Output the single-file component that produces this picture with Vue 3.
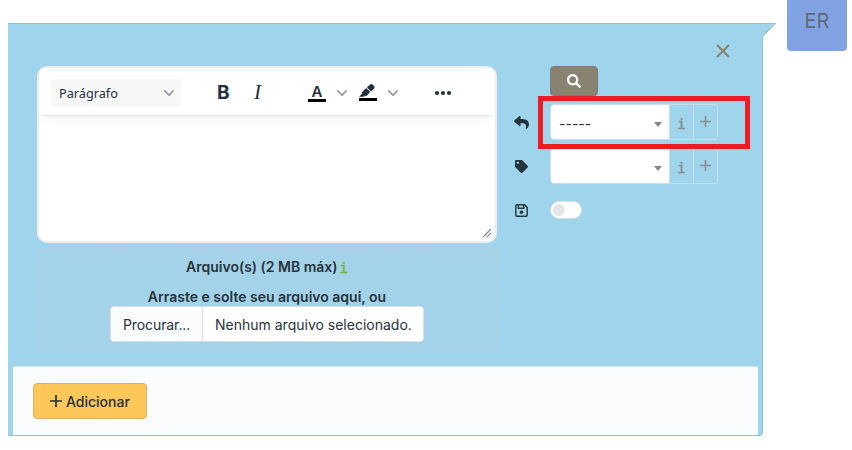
<script setup>
import { ref } from 'vue'

const chevron = 'M8.7 2.2c.3-.3.8-.3 1 0 .4.4.4.9 0 1.2L5.7 7.8c-.3.3-.9.3-1.2 0L.2 3.4a.8.8 0 010-1.2c.3-.3.8-.3 1.1 0L5 6l3.7-3.8z'
const fields = [
  {
    name: 'reply',
    value: '-----',
    icon: 'M8.309 189.836L184.313 37.851C199.719 24.546 224 35.347 224 56.015v80.053c160.629 1.839 288 34.032 288 186.258 0 61.441-39.581 122.309-83.333 154.132-13.653 9.931-33.111-2.533-28.077-18.631 45.344-145.012-21.507-183.51-176.59-185.742V360c0 20.7-24.3 31.453-39.687 18.164l-176.004-152c-11.071-9.562-11.086-26.753 0-36.328z',
    highlighted: true,
  },
  {
    name: 'tag',
    value: '',
    icon: 'M0 252.118V48C0 21.49 21.49 0 48 0h204.118a48 48 0 0 1 33.941 14.059l211.882 211.882c18.745 18.745 18.745 49.137 0 67.882L293.823 497.941c-18.745 18.745-49.137 18.745-67.882 0L14.059 286.059A48 48 0 0 1 0 252.118zM112 64c-26.51 0-48 21.49-48 48s21.49 48 48 48 48-21.49 48-48-21.49-48-48-48z',
    highlighted: false,
  },
]
const saved = ref(false)
</script>

<template>
  <div class="page">
    <section class="panel">
      <svg class="tail" width="15" height="14" viewBox="0 0 15 14">
        <path d="M0 0H13.5L1 13H0z" fill="#9fd5ec" />
        <path d="M0 .5H13.5M13.5 .5L1 13" fill="none" stroke="#8bc1da" stroke-width="1" />
      </svg>
      <svg class="close" width="14" height="14" viewBox="0 0 14 14">
        <path d="M1 1L13 13M13 1L1 13" stroke="#8a816f" stroke-width="2" />
      </svg>

      <div class="body">
        <div class="left">
          <div class="editor">
            <div class="toolbar">
              <div class="format">
                <span>Parágrafo</span>
                <svg width="10" height="10" viewBox="0 0 10 10"><path :d="chevron" /></svg>
              </div>
              <span class="bold">B</span>
              <span class="italic">I</span>
              <span class="color">A</span>
              <svg class="chev first" width="10" height="10" viewBox="0 0 10 10"><path :d="chevron" /></svg>
              <svg class="marker" width="24" height="24" viewBox="0 0 24 24">
                <path d="M3 18h18v3H3z" fill="#000" />
                <path d="M7.7 16.7H3l3.3-3.3-.7-.8L10.2 8l4 4.1-4 4.2c-.2.2-.6.2-.8 0l-.6-.7-1.1 1.1zm5-7.5L11 7.4l3-2.9a2 2 0 012.6 0L18 6c.7.7.7 2 0 2.7l-2.9 2.9-1.8-1.8-.5-.6" fill="#222f3e" />
              </svg>
              <svg class="chev second" width="10" height="10" viewBox="0 0 10 10"><path :d="chevron" /></svg>
              <svg class="more" width="18" height="6" viewBox="0 0 18 6" fill="#222f3e">
                <circle cx="3" cy="3" r="2.1" /><circle cx="9" cy="3" r="2.1" /><circle cx="15" cy="3" r="2.1" />
              </svg>
            </div>
            <div class="canvas">
              <svg width="10" height="10" viewBox="0 0 10 10">
                <path d="M1.2 8.8L8.5 1.5M5 8.8L8.5 5.3" fill="none" stroke="#7f878f" stroke-width="1.2" stroke-linecap="round" />
              </svg>
            </div>
          </div>

          <div class="drop">
            <div class="title"><span>Arquivo(s) (2 MB máx)</span><span class="info">i</span></div>
            <div class="hint">Arraste e solte seu arquivo aqui, ou</div>
            <div class="file">
              <span class="browse">Procurar...</span>
              <span class="none">Nenhum arquivo selecionado.</span>
            </div>
          </div>
        </div>

        <div class="right">
          <button class="search" type="button">
            <svg width="14" height="14" viewBox="0 0 512 512">
              <path fill="#fff" d="M505 442.7L405.3 343c-4.5-4.5-10.6-7-17-7H372c27.6-35.3 44-79.7 44-128C416 93.1 322.9 0 208 0S0 93.1 0 208s93.1 208 208 208c48.3 0 92.7-16.4 128-44v16.3c0 6.4 2.5 12.5 7 17l99.7 99.7c9.4 9.4 24.6 9.4 33.9 0l28.3-28.3c9.4-9.4 9.4-24.6.1-34zM208 336c-70.7 0-128-57.2-128-128 0-70.7 57.2-128 128-128 70.7 0 128 57.2 128 128 0 70.7-57.2 128-128 128z" />
            </svg>
          </button>

          <div v-for="f in fields" :key="f.name" class="field">
            <div class="label">
              <svg :class="f.name" viewBox="0 0 512 512"><path :d="f.icon" fill="#26343c" /></svg>
            </div>
            <div class="group">
              <div class="select"><span>{{ f.value }}</span><i class="caret"></i></div>
              <div class="addon mono">i</div>
              <div class="addon">
                <svg width="11" height="11" viewBox="0 0 11 11"><path d="M5.5 0V11M0 5.5H11" stroke="#8a8c86" stroke-width="1.6" /></svg>
              </div>
            </div>
            <div v-if="f.highlighted" class="highlight"></div>
          </div>

          <div class="field">
            <div class="label">
              <svg class="save" viewBox="0 0 13 13" fill="none" stroke="#26343c" stroke-width="1.4">
                <path d="M2 .8H9.6L12.2 3.4V11a1.2 1.2 0 0 1-1.2 1.2H2A1.2 1.2 0 0 1 .8 11V2A1.2 1.2 0 0 1 2 .8z" />
                <path d="M3.3 1V4.3H8.8V1" />
                <circle cx="6.5" cy="8.2" r="1.8" fill="#26343c" stroke="none" />
              </svg>
            </div>
            <div class="toggle" :class="{ on: saved }" @click="saved = !saved"><span></span></div>
          </div>
        </div>
      </div>

      <footer class="footer">
        <button class="add" type="button">
          <svg width="12" height="12" viewBox="0 0 12 12"><path d="M6 .5V11.5M.5 6H11.5" stroke="#26303a" stroke-width="1.7" stroke-linecap="round" /></svg>
          <span>Adicionar</span>
        </button>
      </footer>
    </section>
    <div class="avatar">ER</div>
  </div>
</template>

<style>
body {
  background: #fff;
}
</style>

<style scoped>
.page {
  display: flex;
  align-items: flex-start;
  box-sizing: border-box;
  width: 852px;
  height: 450px;
  padding-left: 8px;
  font-family: Inter, 'Liberation Sans', sans-serif;
  font-size: 14px;
  color: #26343c;
}
.page * {
  box-sizing: border-box;
}
svg {
  display: block;
  flex: none;
}
.panel {
  position: relative;
  display: flex;
  flex-direction: column;
  width: 755px;
  height: 413px;
  margin-top: 23px;
  border: 1px solid #8bc1da;
  border-left: 0;
  border-radius: 0 0 4px 0;
  background: #9fd5ec;
}
.tail {
  position: absolute;
  left: 754px;
  top: -1px;
}
.close {
  position: absolute;
  left: 708px;
  top: 20px;
}
.avatar {
  width: 60px;
  height: 51px;
  margin-left: 24px;
  border-radius: 0 0 4px 4px;
  background: #82a3e3;
  color: #626976;
  font-size: 20px;
  line-height: 42px;
  text-align: center;
}
.body {
  display: flex;
  height: 342px;
  padding: 42px 0 0 29px;
}
.left {
  width: 461px;
}
.editor {
  width: 460px;
  height: 177px;
  border: 2px solid #eee;
  border-radius: 10px;
  background: #fff;
  overflow: hidden;
}
.toolbar {
  display: flex;
  align-items: center;
  height: 47px;
  padding: 2px 0 0 12px;
  color: #222f3e;
  box-shadow: 0 2px 2px -2px rgba(34, 47, 62, 0.15), 0 8px 8px -4px rgba(34, 47, 62, 0.08);
}
.format {
  display: flex;
  align-items: center;
  justify-content: space-between;
  width: 130px;
  height: 28px;
  padding: 0 7px 0 8px;
  border-radius: 3px;
  background: #f7f7f7;
  font-family: 'Noto Sans', sans-serif;
  font-size: 12.7px;
}
.format span {
  padding-top: 1px;
}
.format svg,
.chev {
  fill: #9097a0;
}
.bold {
  width: 16px;
  margin-left: 36px;
  font-size: 19px;
  font-weight: 700;
}
.italic {
  width: 12px;
  margin-left: 21px;
  font-family: 'Liberation Serif', serif;
  font-size: 21px;
  font-style: italic;
}
.color {
  width: 18px;
  height: 18px;
  margin: 0 0 0 42px;
  border-bottom: 3px solid #000;
  font-size: 15px;
  font-weight: 600;
  line-height: 15px;
  text-align: center;
}
.chev.first {
  margin-left: 11px;
}
.marker {
  margin: -2px 0 0 9px;
}
.chev.second {
  margin-left: 8px;
}
.more {
  margin-left: 36px;
}
.canvas {
  display: flex;
  align-items: flex-end;
  justify-content: flex-end;
  height: 126px;
  padding: 0 3px 3px 0;
}
.drop {
  display: flex;
  flex-direction: column;
  align-items: center;
  width: 461px;
  height: 102px;
  margin-top: 5px;
  padding: 8px 1px 0 0;
  border: 1px dashed #b9cdd8;
  border-radius: 4px;
  background: #a4d3e9;
  font-weight: 600;
}
.title {
  display: flex;
  gap: 2px;
  height: 30px;
  line-height: 20px;
  white-space: nowrap;
}
.info {
  color: #74b038;
  font-family: 'DejaVu Sans Mono', monospace;
  font-weight: 400;
  line-height: 22px;
  -webkit-text-stroke: 0.4px currentColor;
}
.hint {
  height: 19px;
  line-height: 20px;
}
.file {
  display: flex;
  width: 314px;
  height: 36px;
  border: 1px solid #dadfe5;
  border-radius: 4px;
  background: #fff;
  font-weight: 400;
  line-height: 36px;
  white-space: nowrap;
  overflow: hidden;
}
.browse {
  width: 92px;
  padding-left: 12px;
  border-right: 1px solid #dadfe5;
  background: #fafbfd;
  letter-spacing: -0.1px;
}
.none {
  padding-left: 12px;
}
.right {
  display: flex;
  flex-direction: column;
  gap: 8px;
  width: 212px;
  margin-left: 14px;
}
.search {
  display: flex;
  align-items: center;
  justify-content: center;
  width: 48px;
  height: 30px;
  margin-left: 38px;
  padding: 0 1px 0 0;
  border: 1px solid #817c71;
  border-radius: 4px;
  background: #8a8271;
}
.field {
  position: relative;
  display: flex;
  align-items: center;
  height: 36px;
}
.label {
  width: 38px;
  padding: 1px 0 0 2px;
}
.reply {
  width: 15px;
  height: 15px;
}
.tag,
.save {
  width: 13px;
  height: 13px;
  margin-left: 1px;
}
.group {
  display: flex;
  width: 168px;
  height: 36px;
  border: 1px solid #cbdde8;
  border-radius: 4px;
  overflow: hidden;
}
.select {
  display: flex;
  align-items: center;
  justify-content: space-between;
  width: 118px;
  padding: 2px 7px 0 8px;
  background: #fff;
}
.caret {
  width: 0;
  height: 0;
  margin-top: 2px;
  border: 4px solid transparent;
  border-top: 5px solid #888;
  border-bottom: 0;
}
.addon {
  display: flex;
  justify-content: center;
  width: 24px;
  padding-top: 11px;
  border-left: 1px solid #cbdde8;
}
.mono {
  padding-top: 10px;
  color: #8a8c86;
  font-family: 'DejaVu Sans Mono', monospace;
  font-size: 14px;
  line-height: 18px;
  -webkit-text-stroke: 0.4px currentColor;
}
.highlight {
  position: absolute;
  left: 26px;
  top: -8px;
  width: 212px;
  height: 53px;
  border: 5px solid #ed1c24;
  z-index: 1;
}
.toggle {
  width: 32px;
  height: 18px;
  padding: 2px;
  border: 1px solid #dadfe5;
  border-radius: 9px;
  background: #fff;
}
.toggle span {
  display: block;
  width: 12px;
  height: 12px;
  border-radius: 50%;
  background: #e4e5e8;
}
.toggle.on span {
  margin-left: auto;
}
.footer {
  display: flex;
  align-items: flex-start;
  height: 69px;
  margin: 0 4px 0 5px;
  padding: 16px 20px;
  border-top: 1px solid #d4dee8;
  background: #fafbfd;
}
.add {
  display: flex;
  align-items: center;
  gap: 4px;
  width: 114px;
  height: 36px;
  padding: 0 0 0 16px;
  border: 1px solid #d9b263;
  border-radius: 4px;
  background: #fdc75a;
  color: #26303a;
  font-family: inherit;
  font-size: 14px;
  font-weight: 500;
}
.add span {
  padding-top: 1px;
}
</style>
